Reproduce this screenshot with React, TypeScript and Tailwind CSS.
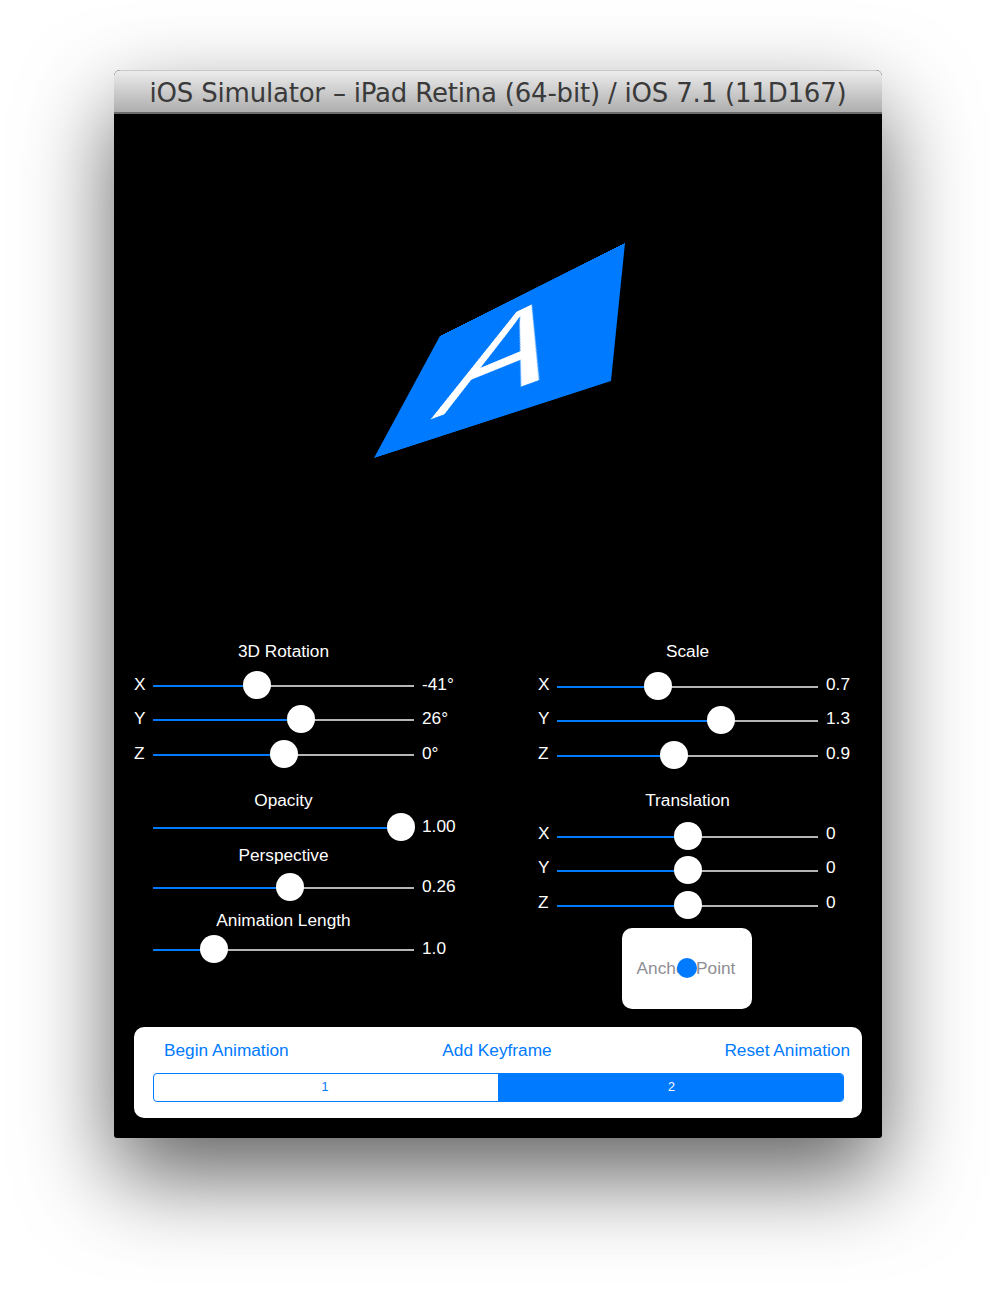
import React from 'react';

const uiFont = { fontFamily: '"Liberation Sans", Arial, sans-serif' };

// square layer -> quad corners seen in the picture (window-relative)
const LAYER = 200;
const quad = [
  [326, 222],
  [511, 129],
  [497, 267],
  [260, 344],
];

function layerMatrix() {
  const [[x0, y0], [x1, y1], [x2, y2], [x3, y3]] = quad;
  const dx1 = x1 - x2;
  const dx2 = x3 - x2;
  const sx = x0 - x1 + x2 - x3;
  const dy1 = y1 - y2;
  const dy2 = y3 - y2;
  const sy = y0 - y1 + y2 - y3;
  const det = dx1 * dy2 - dx2 * dy1;
  const g = (sx * dy2 - dx2 * sy) / det;
  const h = (dx1 * sy - sx * dy1) / det;
  const a = x1 - x0 + g * x1;
  const b = x3 - x0 + h * x3;
  const d = y1 - y0 + g * y1;
  const e = y3 - y0 + h * y3;
  const s = LAYER;
  return `matrix3d(${a / s},${d / s},0,${g / s},${b / s},${e / s},0,${h / s},0,0,1,0,${x0},${y0},0,1)`;
}

function Heading({ children, className = '' }: { children: React.ReactNode; className?: string }) {
  return (
    <div className={`ml-[19px] flex h-5 w-[261px] items-center justify-center pt-[2px] text-[17.25px] text-white ${className}`}>
      {children}
    </div>
  );
}

function SliderRow({
  label,
  value,
  thumb,
  className = '',
  lift = 'pb-[3px]',
}: {
  label?: string;
  value: string;
  thumb: number;
  className?: string;
  lift?: string;
}) {
  return (
    <div className={`flex h-[34px] items-center text-[17.25px] text-white ${className}`}>
      <span className={`w-[19px] ${lift}`}>{label}</span>
      <div className="relative flex h-[2px] w-[261px]">
        <div className="bg-[#007aff]" style={{ width: thumb }} />
        <div className="flex-1 bg-[#b5b5b5]" />
        <div
          className="absolute top-[-14px] h-[28px] w-[28px] -translate-x-1/2 rounded-full bg-white"
          style={{ left: thumb }}
        />
      </div>
      <span className={`ml-2 ${lift}`}>{value}</span>
    </div>
  );
}

export default function App() {
  return (
    <div className="h-[1296px] w-[996px] overflow-hidden bg-white pt-[70px]" style={uiFont}>
      <div className="mx-[114px] h-[1068px] w-[768px] overflow-hidden rounded-t-[6px] rounded-b-[3px] bg-black shadow-[0_38px_90px_0_rgba(0,0,0,0.62)]">
        <div className="flex h-[44px] items-center justify-center border-t border-b-2 border-t-[#c9c9c9] border-b-[#6b6b6b] bg-gradient-to-b from-[#ececec] to-[#aeaeae] pt-[3px] font-['DejaVu_Sans'] text-[26px] tracking-[-0.2px] text-[#3a3a3a]">
          iOS Simulator – iPad Retina (64-bit) / iOS 7.1 (11D167)
        </div>

        <div className="relative h-[527px] overflow-hidden">
          <div
            className="absolute top-0 left-0 flex h-[200px] w-[200px] origin-top-left items-center justify-center bg-[#007aff] text-[147px] leading-none text-white"
            style={{ transform: layerMatrix() }}
          >
            <span className="translate-x-[6px] translate-y-[2px] scale-y-[1.34] -skew-x-[6deg]">A</span>
          </div>
        </div>

        <div className="flex px-5">
          <div className="w-[404px]">
            <Heading>3D Rotation</Heading>
            <SliderRow className="mt-2" label="X" value="-41°" thumb={103.5} />
            <SliderRow label="Y" value="26°" thumb={147.5} />
            <SliderRow className="mt-px" label="Z" value="0°" thumb={130.5} />
            <Heading className="mt-[18px]">Opacity</Heading>
            <SliderRow className="mt-px" value="1.00" thumb={247.5} />
            <Heading>Perspective</Heading>
            <SliderRow className="mt-[6px]" value="0.26" thumb={136.5} />
            <Heading className="mt-[5px]">Animation Length</Heading>
            <SliderRow className="mt-[3px]" value="1.0" thumb={60.5} />
          </div>
          <div className="flex-1">
            <Heading>Scale</Heading>
            <SliderRow className="mt-[9px]" lift="pb-[5px]" label="X" value="0.7" thumb={100.5} />
            <SliderRow lift="pb-[5px]" label="Y" value="1.3" thumb={163.5} />
            <SliderRow className="mt-px" lift="pb-[5px]" label="Z" value="0.9" thumb={116.5} />
            <Heading className="mt-[17px]">Translation</Heading>
            <SliderRow className="mt-[10px]" lift="pb-[7px]" label="X" value="0" thumb={130.5} />
            <SliderRow lift="pb-[7px]" label="Y" value="0" thumb={130.5} />
            <SliderRow className="mt-px" lift="pb-[7px]" label="Z" value="0" thumb={130.5} />
            <div className="relative mt-[5px] ml-[84px] flex h-[81px] w-[130px] items-center justify-center rounded-[10px] bg-white pr-[2px] text-[17.25px] text-[#8e8e93]">
              Anchor Point
              <div className="absolute top-[30px] left-[55px] h-5 w-5 rounded-full bg-[#007aff]" />
            </div>
          </div>
        </div>

        <div className="mx-5 mt-[18px] h-[91px] rounded-[10px] bg-white">
          <div className="grid h-[46px] grid-cols-[1fr_auto_1fr] items-center pt-[2px] text-[17.25px] text-[#007aff]">
            <span className="pl-[30px]">Begin Animation</span>
            <span className="pr-[2px]">Add Keyframe</span>
            <span className="pr-[12px] text-right">Reset Animation</span>
          </div>
          <div className="ml-[19px] flex h-[29px] w-[691px] overflow-hidden rounded-[4px] border border-[#007aff] text-[12.5px]">
            <div className="flex w-[344px] items-center justify-center pr-[2px] text-[#007aff]">1</div>
            <div className="flex flex-1 items-center justify-center bg-[#007aff] pl-[2px] text-white">2</div>
          </div>
        </div>
      </div>
    </div>
  );
}
